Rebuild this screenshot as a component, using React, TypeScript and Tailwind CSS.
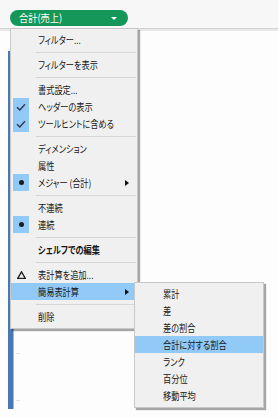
import React from "react";

type Icon = "check" | "dot" | "tri" | null;

const Check = () => (
  <svg width="10" height="8" viewBox="0 0 10 8">
    <path d="M1 4.2 L3.8 7 L9 1.2" fill="none" stroke="#2f3b4b" strokeWidth="1.4" />
  </svg>
);

const Dot = () => <div className="w-[5px] h-[5px] rounded-full bg-[#1d1d1d]" />;

const Tri = () => (
  <svg width="9" height="8" viewBox="0 0 9 8">
    <path d="M4.5 0.8 L8.3 7.3 L0.7 7.3 Z" fill="none" stroke="#1d1d1d" strokeWidth="1.3" />
  </svg>
);

const Arrow = () => (
  <div className="w-0 h-0 border-l-[4px] border-l-[#111] border-y-[3.5px] border-y-transparent" />
);

function Item({
  label,
  icon = null,
  arrow = false,
  hl = false,
  bold = false,
}: {
  label: string;
  icon?: Icon;
  arrow?: boolean;
  hl?: boolean;
  bold?: boolean;
}) {
  const iconBg = icon === "check" || icon === "dot" ? "bg-[#91c9f7]" : "";
  return (
    <div className={`flex items-center h-[17px] pl-[2px] ${hl ? "bg-[#91c9f7]" : ""}`}>
      <div className={`w-[16px] h-[17px] shrink-0 flex items-center justify-center ${iconBg}`}>
        {icon === "check" && <Check />}
        {icon === "dot" && <Dot />}
        {icon === "tri" && <Tri />}
      </div>
      <span
        className={`ml-[9px] leading-none whitespace-nowrap text-[#161616] origin-left scale-x-[0.82] ${
          bold ? "font-bold" : ""
        }`}
      >
        {label}
      </span>
      {arrow && (
        <div className="ml-auto mr-[8px]">
          <Arrow />
        </div>
      )}
    </div>
  );
}

const Sep = () => (
  <div className="h-[8px] flex items-center pl-[25px] pr-[1px]">
    <div className="h-px w-full bg-[#d6d6d6]" />
  </div>
);

function SubItem({ label, hl = false }: { label: string; hl?: boolean }) {
  return (
    <div className={`flex items-center h-[17px] pl-[28px] ${hl ? "bg-[#91c9f7]" : ""}`}>
      <span className="leading-none whitespace-nowrap text-[#161616] origin-left scale-x-[0.82]">{label}</span>
    </div>
  );
}

export default function App() {
  return (
    <div className="relative w-[278px] h-[418px] overflow-hidden bg-[#fdfdfd] text-[10px] [font-family:'Noto_Sans_CJK_JP',sans-serif] [font-feature-settings:'palt']">
      {/* top shelf strip */}
      <div className="h-[28px] bg-[#f7f7f7] pt-[10px] pl-[10px]">
        <div className="w-[118px] h-[16px] rounded-full bg-[#16975a] flex items-center pl-[9px] pr-[11px]">
          <span className="text-white leading-none text-[10.5px] whitespace-nowrap origin-left scale-x-[0.88]">
            合計(売上)
          </span>
          <div className="ml-auto w-0 h-0 border-t-[3.5px] border-t-white border-x-[3.5px] border-x-transparent" />
        </div>
      </div>
      <div className="h-px bg-[#d2d2d2]" />
      <div className="h-[2px] bg-[#e8e8e8]" />

      {/* canvas */}
      <div className="flex pl-[8px] pt-[20px]">
        <div className="w-[6px] h-[358px] bg-[#4a78b2] border-r border-r-[#9dbbe0]" />
        <div className="flex flex-col pl-[2px] w-[6px]">
          <div className="h-[302px]" />
          <div className="h-px w-[4px] bg-[#e2e2e2]" />
          <div className="h-[46px]" />
          <div className="h-px w-[4px] bg-[#e2e2e2]" />
        </div>
      </div>

      {/* context menu */}
      <div className="absolute left-[10px] top-[28px] w-[128px] bg-[#f0f0f0] border border-[#c8c8c8] shadow-[2px_2px_1px_rgba(0,0,0,0.35)] pt-[2px] pb-[3px]">
        <Item label="フィルター..." />
        <Sep />
        <Item label="フィルターを表示" />
        <Sep />
        <Item label="書式設定..." />
        <Item label="ヘッダーの表示" icon="check" />
        <Item label="ツールヒントに含める" icon="check" />
        <Sep />
        <Item label="ディメンション" />
        <Item label="属性" />
        <Item label="メジャー (合計)" icon="dot" arrow />
        <Sep />
        <Item label="不連続" />
        <Item label="連続" icon="dot" />
        <Sep />
        <Item label="シェルフでの編集" bold />
        <Sep />
        <Item label="表計算を追加..." icon="tri" />
        <Item label="簡易表計算" hl arrow />
        <Sep />
        <Item label="削除" />
      </div>

      {/* submenu */}
      <div className="absolute left-[134px] top-[282px] w-[130px] bg-[#f0f0f0] border border-[#c8c8c8] shadow-[2px_2px_1px_rgba(0,0,0,0.35)] pt-[2px] pb-[3px]">
        <SubItem label="累計" />
        <SubItem label="差" />
        <SubItem label="差の割合" />
        <SubItem label="合計に対する割合" hl />
        <SubItem label="ランク" />
        <SubItem label="百分位" />
        <SubItem label="移動平均" />
      </div>
    </div>
  );
}
